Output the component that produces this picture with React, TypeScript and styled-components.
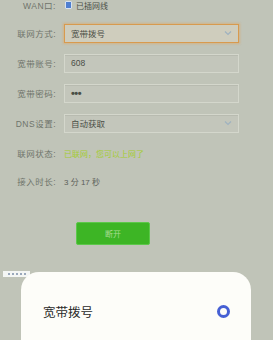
import React from "react";
import styled, { createGlobalStyle } from "styled-components";

const GlobalStyle = createGlobalStyle`
  html, body {
    margin: 0;
    padding: 0;
    background: #c0c4b8;
    overflow: hidden;
  }
  body {
    font-family: "Liberation Sans", "Noto Sans CJK SC", sans-serif;
  }
`;

const Page = styled.div`
  width: 273px;
  height: 340px;
  position: relative;
  overflow: hidden;
  background: #c0c4b8;
`;

const Form = styled.div`
  display: flex;
  flex-direction: column;
  margin-top: -8px;
`;

const Row = styled.div<{ $h?: number }>`
  display: flex;
  align-items: center;
  height: ${({ $h }) => $h ?? 30}px;
`;

const Label = styled.div`
  width: 56px;
  text-align: right;
  font-size: 8.5px;
  color: #6f746b;
  letter-spacing: 0.5px;
  flex-shrink: 0;
`;

const Field = styled.div<{ $focus?: boolean }>`
  margin-left: 8px;
  width: 175px;
  height: 19px;
  box-sizing: border-box;
  display: flex;
  align-items: center;
  justify-content: space-between;
  padding: 0 6px;
  font-size: 8.5px;
  color: #4a4e46;
  background: ${({ $focus }) => ($focus ? "#cfcdbd" : "#c3c6bb")};
  border: 1px solid ${({ $focus }) => ($focus ? "#d89a4e" : "#d4d7cc")};
  box-shadow: ${({ $focus }) =>
    $focus ? "0 0 2px 1px rgba(230,160,80,0.45)" : "inset 0 1px 0 #b8bbb0"};
`;

const Dots = styled.span`
  font-family: "Liberation Sans", sans-serif;
  font-size: 11px;
  font-weight: bold;
  letter-spacing: -0.5px;
`;

const Chevron = () => (
  <svg width="8" height="6" viewBox="0 0 8 6">
    <path d="M1 1.5 L4 4.5 L7 1.5" fill="none" stroke="#9fb2c0" strokeWidth="1.2" />
  </svg>
);

const Value = styled.div<{ $color?: string }>`
  margin-left: 8px;
  font-size: 8px;
  color: ${({ $color }) => $color ?? "#5c6058"};
`;

const Check = styled.div`
  margin-left: 9px;
  width: 7px;
  height: 8px;
  border-radius: 1px;
  background: #4f7fd0;
  border: 1px solid #d8e2ef;
  box-sizing: border-box;
`;

const CheckText = styled.div`
  margin-left: 4px;
  font-size: 8px;
  color: #4b4f47;
`;

const ButtonWrap = styled.div`
  display: flex;
  padding-left: 76px;
  margin-top: 28px;
`;

const Button = styled.div`
  width: 74px;
  height: 23px;
  border-radius: 2px;
  background: #3db525;
  border: 1px solid #5cc84a;
  box-sizing: border-box;
  display: flex;
  align-items: center;
  justify-content: center;
  font-size: 8px;
  color: #a9dc92;
`;

const Toast = styled.div`
  position: absolute;
  left: 3px;
  top: 271px;
  width: 27px;
  height: 6px;
  background: #f4f6f4;
  display: flex;
  align-items: center;
  justify-content: center;
  gap: 2px;
`;

const Dot = styled.span`
  width: 2px;
  height: 2px;
  border-radius: 50%;
  background: #7d8ea8;
`;

const Sheet = styled.div`
  position: absolute;
  left: 21px;
  top: 272px;
  width: 230px;
  height: 90px;
  background: #fdfdf9;
  border-radius: 18px 18px 0 0;
  box-sizing: border-box;
  padding: 30px 22px 0 22px;
`;

const Option = styled.div`
  display: flex;
  align-items: center;
  justify-content: space-between;
  height: 18px;
`;

const OptionText = styled.div`
  font-size: 12.5px;
  color: #2b2b2b;
`;

const Radio = styled.div`
  width: 13px;
  height: 13px;
  border-radius: 50%;
  border: 3px solid #4660d4;
  box-sizing: border-box;
  margin-right: -1px;
`;

export default function App() {
  return (
    <Page>
      <GlobalStyle />
      <Form>
        <Row $h={26}>
          <Label>WAN口:</Label>
          <Check />
          <CheckText>已插网线</CheckText>
        </Row>
        <Row>
          <Label>联网方式:</Label>
          <Field $focus>
            <span>宽带拨号</span>
            <Chevron />
          </Field>
        </Row>
        <Row>
          <Label>宽带账号:</Label>
          <Field>608</Field>
        </Row>
        <Row>
          <Label>宽带密码:</Label>
          <Field>
            <Dots>•••</Dots>
          </Field>
        </Row>
        <Row>
          <Label>DNS设置:</Label>
          <Field>
            <span>自动获取</span>
            <Chevron />
          </Field>
        </Row>
        <Row>
          <Label>联网状态:</Label>
          <Value $color="#a4cc32">已联网，您可以上网了</Value>
        </Row>
        <Row $h={26}>
          <Label>接入时长:</Label>
          <Value>3 分 17 秒</Value>
        </Row>
      </Form>
      <ButtonWrap>
        <Button>断开</Button>
      </ButtonWrap>
      <Toast>
        <Dot />
        <Dot />
        <Dot />
        <Dot />
        <Dot />
      </Toast>
      <Sheet>
        <Option>
          <OptionText>宽带拨号</OptionText>
          <Radio />
        </Option>
      </Sheet>
    </Page>
  );
}
